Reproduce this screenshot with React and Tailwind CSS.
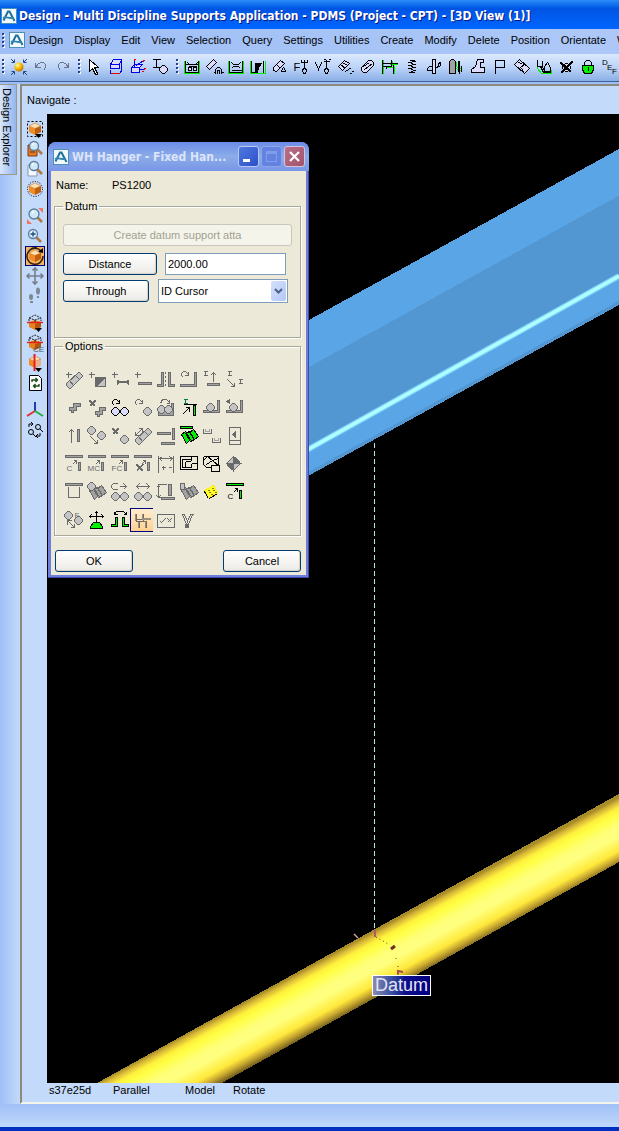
import React from "react";

const G = "#6a6a6a";
const L = "#c4c4c4";
const M = "#a2a2a2";
const K = "#000000";
const N = "#00f000";
const V = "#dcdcfa";

const plus = ["M3 0V6M0 3H6", G];
const cross = (c) => ["M1 1L7 7M2 1L7 6M1 2L6 7M7 1L1 7M6 1L1 6M7 2L2 7", c];
const diagBar = ["M1 12L13 1H14L17 4V5L5 17H4L1 14ZM4 9L8 14M10 4L14 8", G, L];
const dia = (x, y, c = G, f = L) => [`M${x - 1} ${y - 4}H${x + 1}L${x + 4} ${y - 1}V${y + 1}L${x + 1} ${y + 4}H${x - 1}L${x - 4} ${y + 1}V${y - 1}Z`, c, f];
const curve = (c) => ["M3 6L1 4V2L3 0H5L8 3M8 0V4H4", c];
const ell = ["M14 1H16V15H0V13H14Z", G, M];
const topBar = (c, f) => ["M0 0H17V2H0Z", c, f];
const post = (c, f) => ["M13 7H15V15H13Z", c, f];
const smallArrow = (c) => ["M7 9L11 5M8 5H11V8", c];
const beam = (c, f) => ["M1 7L5 4L10 12L6 16ZM5 6L9 4L14 12L10 14ZM9 5L13 2L18 9L14 12Z", c, f];

const OPTIONS = [
  { n: "Add plate", p: [diagBar, plus] },
  { n: "Add corner", p: [plus, ["M7 6H17V15H7Z", G, G], ["M16 8L10 14H16Z", L, L]] },
  { n: "Add beam", p: [plus, ["M6 8V13M17 8V13M6 9L8 10H15L17 9M6 12L8 11H15L17 12", G]] },
  { n: "Add bar", p: [plus, ["M4 11H17V13H4Z", G, M]] },
  { n: "Mirror", p: [["M4 1H6V15H0V13H4ZM11 1H13V13H17V15H11Z", G, M], ["M8 0V2M8 4V6M8 8V10M8 12V14", G]] },
  { n: "Rotate leg", p: [ell, curve(G)] },
  { n: "Raise beam", p: [["M0 0H4M0 4H4M2 0V4M10 10V1M7 4L10 1L13 4", G], ["M4 12H16V14H4Z", G, M]] },
  { n: "Move beam", p: [["M1 0H5M1 4H5M3 0V4M12 8H16M12 12H16M14 8V12M1 8L8 15M4 15H8V11", G], ["M2 0H4M2 4H4M13 8H15M13 12H15", G]] },

  { n: "Step", p: [["M4 8H8V4H15V7H11V11H8V13H6V11H4Z", G, M]] },
  { n: "Delete step", p: [cross(G), ["M7 12H11V8H17V11H14V15H11V17H9V15H7Z", G, M]] },
  { n: "Rotate pair", p: [curve(K), dia(4, 12, K, V), dia(13, 12, K, V)] },
  { n: "Rotate one", p: [curve(G), dia(13, 12)] },
  { n: "Swap pair", p: [["M1 11H14V4H16V16H1Z", G, M], dia(4, 10), dia(11, 10), ["M3 4L5 0H9L12 3M12 0V4H9", G]] },
  { n: "Align post", p: [["M3 0H7M3 4H7M5 0V4", "#007850"], ["M3 5H16M2 15L9 8M5 8H9V12", K], ["M13 6H15V16H13Z", K, N]] },
  { n: "Pipe on leg", p: [["M14 1H16V13H0V11H14Z", G, M], dia(7, 8)] },
  { n: "Pipe to leg", p: [["M14 1H16V13H0V11H14Z", G, M], dia(7, 8), ["M0 2L3 0V4Z", G, G]] },

  { n: "Lift post", p: [["M6 15V2M3 5L6 2L9 5", G], ["M12 2H14V14H12Z", G, M]] },
  { n: "Move pair", p: [dia(3, 3), dia(13, 8), ["M2 9L9 16M5 16H9V12", G]] },
  { n: "Delete item", p: [cross(G), dia(13, 12)] },
  { n: "Slide plate", p: [diagBar, ["M1 8L8 1M1 4V8H5M4 1H8V4", G]] },
  { n: "Space bars", p: [["M0 5H13V7H0ZM15 1H17V12H15ZM4 15H17V17H4Z", G, M]] },
  { n: "Deck beam", p: [beam(K, N), ["M0 -1H12V1H0Z", K, N]] },
  { n: "Channels", p: [["M0 1V6H8V1M9 10V15H17V10", G], ["M2 1V4H6V1M11 10V13H15V10", M]] },
  { n: "Sheet view", p: [["M3 0H14V17H3ZM3 13H14", G], ["M6 7L9 4V10Z", G, G]] },

  { n: "Copy support", p: [topBar(G, M), post(G, M), smallArrow(G)], t: ["C", 1, 15, G] },
  { n: "Mirror copy", p: [topBar(G, M), post(G, M), smallArrow(G)], t: ["MC", -1, 15, G] },
  { n: "Flip copy", p: [topBar(G, M), post(G, M), smallArrow(G)], t: ["FC", 0, 15, G] },
  { n: "Delete copy", p: [topBar(G, M), post(G, M), smallArrow(G), ["M2 9L9 16M3 9L9 15M2 10L8 16M9 9L2 16M8 9L2 15", G]] },
  { n: "Dimension", p: [["M1 0V17M16 0V17M2 3H15M5 1L2 3L5 6M12 1L15 3L12 6M4 12H8M6 10V14M11 12H14", G]] },
  { n: "Plan view", p: [["M0 1H17V14H0ZM2 12V4H10M2 12H11V8M11 1V5M11 8H17M5 6V12M5 6H10", K]] },
  { n: "Detail view", p: [["M0 1H15V9M0 1V9L3 12H9M0 5L4 1M3 9L9 5L15 3M4 1L15 10", K], ["M8 10H16V16H8Z", K, "#ece9d8"]] },
  { n: "Centre", p: [["M7 1L14 8L7 15L0 8Z", G, L], ["M7 1V8H14L11 4ZM7 15V8H0L3 12Z", G, G], ["M7 0V16M-1 8H15", G]] },

  { n: "Table frame", p: [topBar(G, M), ["M3 3V14H14V3", G]] },
  { n: "Beam end", p: [beam(G, M), dia(3, 3)] },
  { n: "Turn left", p: [dia(4, 13), dia(13, 13), ["M6 6H2L0 4V2L2 0H6M8 3H15M12 0L15 3L12 6", G]] },
  { n: "Spread pair", p: [dia(4, 13), dia(13, 13), ["M2 3H15M5 0L2 3L5 6M12 0L15 3L12 6", G]] },
  { n: "Height", p: [["M11 1H14V12H11ZM4 14H17V16H4Z", G, M], ["M1 2V14M0 1H9M0 14H3M-1 4L1 2L3 4M-1 12L1 14L3 12", G]] },
  { n: "Beam block", p: [beam(G, M), ["M0 0H4V6H0Z", G, L]] },
  { n: "Notes", p: [["M1 7L10 2L14 9L5 14Z", "#fff200", "#ffff30"], ["M1 8L5 15M6 15L14 10", K], ["M4 7H6M8 5H10M5 9H7M9 7H11M7 11H9M11 9H13", "#8a7c00"]] },
  { n: "Copy post", p: [topBar(K, N), post(K, N), smallArrow(K)], t: ["C", 1, 15, K] },

  { n: "Fit pair", p: [dia(3, 4), dia(13, 9), ["M2 9L9 16M2 13V9H6M5 16H9V12", G]], t: ["F", 9, 6, G] },
  { n: "Move base", p: [["M1 5H15M8 0V10M3 3L1 5L3 7M13 3L15 5L13 7M6 2L8 0L10 2", K], ["M2 17V15L5 11H11L14 15V17Z", K, N]] },
  { n: "Swing legs", p: [["M4 6H6V15H0V13H4ZM11 6H13V13H17V15H11Z", K, N], ["M3 3L5 0H12L15 3M3 0V3H6M12 3H15V0", K]] },
  { n: "Join frames", on: true, p: [["M2 2V9M9 2V9M1 8H11M1 10H11M5 10V16M12 9V16", G], ["M1 2V9M8 2V8M8 7H16M8 8H16M4 10V16M11 9V16", "#9a9082"]] },
  { n: "Check", p: [["M0 3H17V16H0ZM3 10L4 11L8 7M10 7L14 11M14 7L10 11", G]] },
  { n: "Clamp", p: [["M1 3H4M2 3L6 13M4 3L7 10L10 3M12 3L8 13M10 3H13", G], ["M5 13H8V16H5Z", G, G]] },
];

function Icon({ p, t }) {
  return (
    <svg width="18" height="18" viewBox="0 0 18 18" className="shrink-0 overflow-visible" shapeRendering="crispEdges" aria-hidden="true">
      <g transform="translate(.5 .5)">
        {p.map(([d, s, f], i) => (
          <path key={i} d={d} stroke={s} fill={f || "none"} />
        ))}
        {t && (
          <text x={t[1]} y={t[2]} fill={t[3]} fontSize={t[4] || 8} fontFamily="Liberation Sans, sans-serif">{t[0]}</text>
        )}
      </g>
    </svg>
  );
}

function Ball() {
  return (
    <svg width="18" height="18" viewBox="0 0 18 18" className="overflow-visible" aria-hidden="true">
      <defs>
        <radialGradient id="ball" cx=".35" cy=".3" r=".8">
          <stop offset="0" stopColor="#fff8c0" />
          <stop offset=".4" stopColor="#ffc800" />
          <stop offset="1" stopColor="#c06000" />
        </radialGradient>
      </defs>
      <circle cx="9" cy="9" r="4.5" fill="url(#ball)" />
      <path d="M1 1L4 4M4.500 1.500V4.500H1.500M17 1L14 4M13.500 1.500V4.500H16.500M1 17L4 14M1.500 13.500H4.500V16.500M17 17L14 14M16.500 13.500H13.500V16.500" stroke="#204880" fill="none" />
    </svg>
  );
}

const B = "#0000e8";
const R = "#e80000";
const UD = "#6b7488";
const TOOLBAR = [
  [
    { n: "Focus", ball: true },
    { n: "Undo", p: [["M3 4V9H8M3 9L6 5L9 4H11L13 6V9L11 12", UD]] },
    { n: "Redo", p: [["M14 4V9H9M14 9L11 5L8 4H6L4 6V9L6 12", UD]] },
  ],
  [
    { n: "Select", p: [["M4 1V13L7 10L10 16H12V15L9 9H13Z", K, "#fff"]] },
    { n: "Model box", p: [["M3 6L6 1H14L12 6ZM3 6H12V10H3ZM14 1V13", B, V], ["M3 11V15H12L14 12", B], ["M3 15H12", R]] },
    { n: "Axes", p: [["M2 9H10V14H2ZM2 9L5 6H13L10 9Z", B, V], ["M5 8V1M7 7L14 2M10 11H15", B], ["M4 1H6M5 0V2M13 2H15M14 1V3M14 10H16M15 9V11M12 13H14", R]] },
    { n: "Attach pipe", p: [["M1 1H9M1 9H9M5 1V9", K], dia(12, 11, K, V)] },
  ],
  [
    { n: "Frame", p: [["M1 2V15H16V2", N], ["M2 2V14M15 2V14M2 14H15M2 6H15M5 8H13M4 4L6 6M14 4L12 6", K], ["M5 9H8V12H5ZM10 9H13V12H10Z", K, V]] },
    { n: "Clamp plate", p: [["M1 8L8 1L11 4L4 11Z", K, V], ["M10 15V11L12 9H14L16 11V15M8 14H10M16 14H18M12 15V12H14V15", K]] },
    { n: "Beam frame", p: [["M1 2V15H16V2", N], ["M2 2V14M15 2V14M2 14H15M4 4L6 6H11L13 4M4 10L6 8H11L13 10M4 12H14", K]] },
    { n: "Corner frame", p: [["M1 2V15H16V2", N], ["M2 2V14M14 2V14M2 14H6", K], ["M6 14V5H12L9 9L8 14Z", K, K]] },
    { n: "Ancillary", p: [["M2 9L9 2L13 5L5 13L2 12ZM5 6L9 10", K, V], ["M9 14L12 9L15 14M10 13H14", K]] },
    { n: "Fork F", p: [["M11 1V9M8 1V4H14V1M10 10H12L13 12L12 15H10L9 12Z", K]], t: ["F", 0, 12, K, 11] },
    { n: "Fork V", p: [["M0 4L3 11L6 4M11 1V9M8 1H10M13 1H15M8 3H14M10 10H12L13 12L12 15H10L9 12Z", K]] },
    { n: "Plate move", p: [["M1 8L7 2L12 5L5 12ZM3 6L8 10M5 4L10 7", K, V], ["M8 13L14 9M14 13H16M12 15H14", K]] },
    { n: "Roll", p: [["M2 9L9 2H12L14 4V7L7 14H4L2 12ZM4 8L10 4M5 11L13 5", K, V]] },
    { n: "Join", p: [["M2 1V15M11 2V7M4 9H11M8 6H16M13 7V15", N], ["M1 1V15M1 5H10M1 8H10M10 1V8M8 5H16M12 6V15M5 8V10", K]] },
    { n: "Spring", p: [["M6 2H11L12 3L6 4L11 6L6 7L11 9L6 10L11 12L6 14H11", K]] },
    { n: "Guide", p: [["M7 1H10V15H7Z", K, V], ["M7 8H4L2 10V12H7M10 9L13 8V5L15 4V7L10 10", K]] },
    { n: "Column", p: [["M2 3L4 1H6L8 3V15H2Z", K, M], ["M9 3V8L12 10L15 9M9 10L14 13", N], ["M12 2V15M11 2V13M14 7V13", K]] },
    { n: "Base plate", p: [["M2 14V11L6 8L8 1H14V4H11V9H15V14Z", K, V]] },
    { n: "Flag", p: [["M4 15V2H13V9H4", K]] },
    { n: "Wrap", p: [["M1 6L6 1L16 10L11 15ZM4 3L9 6M7 9L12 5M11 15L8 10", K, V]] },
    { n: "Bracket", p: [["M2 8V10L6 15H16V11", N], ["M2 1V8H7V2M7 8L9 13M5 8L8 14H15V9L12 4L9 8V13H14", K]] },
    { n: "Remove", p: [dia(9, 9, K, V), ["M3 4L14 14M4 4L14 13M3 5L13 14M15 3L3 15M14 3L3 14M15 4L4 15", K]] },
    { n: "Lock", p: [["M5 7V4L7 2H10L12 4V7", K], ["M3 7H14V11L12 15H5L3 11Z", K, N], ["M8 9H9V12H8", K]] },
    { n: "Define", extra: true },
  ],
];

function Grip() {
  return (
    <svg width="3" height="19" viewBox="0 0 3 19" shapeRendering="crispEdges" className="shrink-0" aria-hidden="true">
      {[2, 6, 10, 14].map((y) => (
        <g key={y}>
          <rect x="1" y={y + 1} width="2" height="2" fill="#fff" />
          <rect x="0" y={y} width="2" height="2" fill="#27418f" />
        </g>
      ))}
    </svg>
  );
}

function Logo() {
  return (
    <svg width="16" height="16" viewBox="0 0 16 16" className="shrink-0" aria-hidden="true">
      <rect x=".5" y=".5" width="15" height="15" fill="#f2f8fb" stroke="#4a90b8" />
      <path d="M2.500 12.500L7 3.500H8.500L13.500 13" fill="none" stroke="#20709c" strokeWidth="2" />
      <path d="M2 10C5 8 8 11 13 10" fill="none" stroke="#2f86b0" strokeWidth="1.800" />
    </svg>
  );
}

const Cube = ({ x = 3, y = 3 }) => (
  <g transform={`translate(${x} ${y})`}>
    <path d="M0 3L6 0L12 3L6 5.500Z" fill="#ffe0b0" stroke="#b86a20" strokeWidth=".5" />
    <path d="M0 3L6 5.500V12L0 9Z" fill="#f08c28" />
    <path d="M12 3L6 5.500V12L12 9Z" fill="#c0600e" />
  </g>
);
const Lens = ({ x = 7, y = 6, r = 4.5 }) => (
  <g>
    <path d={`M${x + 3} ${y + 3}L${x + 8} ${y + 8}`} stroke="#b07840" strokeWidth="2.500" />
    <circle cx={x} cy={y} r={r} fill="#cfe8fa" stroke="#5c7c9c" strokeWidth="1.300" />
    <path d={`M${x - 2} ${y - 1}L${x} ${y - 3}`} stroke="#fff" strokeWidth="1.200" />
  </g>
);
const Drop = () => <path d="M9 14H16L12.500 18Z" fill="#000" />;
const Wire = () => (
  <g>
    <path d="M3 8L9 6L15 8V13L9 16L3 13Z" fill="#e8801c" />
    <path d="M9 10L15 8V13L9 16Z" fill="#b4560c" />
    <path d="M3 7V4L9 1L15 4V7M3 4L9 6L15 4M9 6V9" fill="none" stroke="#222" strokeDasharray="2 1" />
    <path d="M1 8.500H17" stroke="#e02020" strokeWidth="1.400" />
  </g>
);

const NAV = [
  [
    ["Zoom to selection", <><rect x="1.500" y="1.500" width="15" height="15" fill="none" stroke="#000" strokeDasharray="2 2" /><Cube /><Drop /></>],
    ["Zoom to element", <><path d="M2 5H11V16H2Z" fill="#e07828" stroke="#8a3c0c" /><path d="M4 12H9" stroke="#702c08" /><Lens x={8} y={6} /></>],
    ["Zoom to drawing", <><path d="M2 5H11V16H2Z" fill="#f4f8ff" stroke="#8a97ac" /><Lens x={8} y={6} /></>],
    ["Limits", <><circle cx="9" cy="9" r="7.5" fill="none" stroke="#000" strokeDasharray="1 1.500" /><Cube /></>],
  ],
  [
    ["Zoom area", <><path d="M12 1H17V6ZM1 12V17H6Z" fill="#f07860" /><Lens x={8} y={7} r={5} /></>],
    ["Zoom in", <><Lens x={7} y={7} /><path d="M4.500 7H9.500M7 4.500V9.500" stroke="#244a78" strokeWidth="1.300" /></>],
    ["Rotate", <><Cube /><path d="M15 4A8 8 0 1 0 17 9M11 1A8 8 0 0 0 5 2" fill="none" stroke="#302010" strokeWidth="1.500" /><path d="M12 5L17 1V6Z" fill="#000" /></>, true],
    ["Pan", <path d="M9 1V17M1 9H17M6.500 3.500L9 1L11.500 3.500M6.500 14.500L9 17L11.500 14.500M3.500 6.500L1 9L3.500 11.500M14.500 6.500L17 9L14.500 11.500" fill="none" stroke="#75808f" strokeWidth="1.600" />],
    ["Walk", <g fill="#7e8794"><ellipse cx="5" cy="10" rx="2" ry="3" /><rect x="4" y="14" width="3" height="2" /><ellipse cx="12" cy="4" rx="2" ry="3.500" /><rect x="11" y="9" width="2" height="2" /></g>],
  ],
  [
    ["Clip box", <><Wire /><Drop /></>],
    ["Clip current element", <><Wire /><text x="7" y="18" fontSize="8" fill="#4c5666" fontFamily="Liberation Sans, sans-serif">CE</text></>],
    ["Clip plane", <><Cube y={2} /><path d="M9 7.500L15 5V11L9 14Z" fill="#e8b08c" /><path d="M8.500 0V17" stroke="#e82020" strokeWidth="2" /><Drop /></>],
    ["Refresh", <><path d="M3.500 1.500H12.500L15.500 4.500V16.500H3.500Z" fill="#fff" stroke="#000" /><path d="M6 8V6H11M9.500 4L11.500 6L9.500 8M13 10V12H8M9.500 10L7.500 12L9.500 14" fill="none" stroke="#184c18" strokeWidth="1.400" /></>],
  ],
  [
    ["Axes", <><path d="M9 10V1" stroke="#2040b0" strokeWidth="2" /><path d="M9 10L1 15" stroke="#e03030" strokeWidth="2" /><path d="M9 10L17 15" stroke="#20b040" strokeWidth="2" /></>],
    ["Swap views", <g fill="none" stroke="#000"><circle cx="12" cy="6" r="2.500" /><path d="M14 8L17 11M3 6V3H6M5 1L7 3L5 5M14 12V15H10M12 13L10 15L12 17M7 13L10 16" /><circle cx="5" cy="11" r="2.500" /></g>],
  ],
];

const MENU = ["Design", "Display", "Edit", "View", "Selection", "Query", "Settings", "Utilities", "Create", "Modify", "Delete", "Position", "Orientate", "Window"];

function Scene() {
  return (
    <svg className="absolute inset-0 h-full w-full" aria-hidden="true">
      <defs>
        <linearGradient id="pipe" gradientUnits="userSpaceOnUse" x1="97" y1="1083" x2="126" y2="1136">
          <stop offset="0" stopColor="#a88c28" />
          <stop offset=".06" stopColor="#d8b838" />
          <stop offset=".15" stopColor="#fff03c" />
          <stop offset=".24" stopColor="#ffff44" />
          <stop offset=".42" stopColor="#ffff7c" />
          <stop offset=".56" stopColor="#ffff80" />
          <stop offset=".68" stopColor="#fff458" />
          <stop offset=".78" stopColor="#ffe83c" />
          <stop offset=".88" stopColor="#c8a830" />
          <stop offset="1" stopColor="#66541a" />
        </linearGradient>
      </defs>
      <g transform="translate(-47 -114)">
        <g shapeRendering="crispEdges">
          <path d="M299 325.500L619 149V305L299 481Z" fill="#5aa5e6" />
          <path d="M299 372.500L619 195.500V276L299 455Z" fill="#5296d2" />
          <path d="M299 477L619 301V305L299 481Z" fill="#5296d2" />
        </g>
        <path d="M299 454.500L619 276" stroke="#7cd0fa" strokeWidth="6" />
        <path d="M299 454.500L619 276" stroke="#b0ffff" strokeWidth="3.500" />
        <path d="M97 1083L619 794V862L222 1083Z" fill="url(#pipe)" shapeRendering="crispEdges" />
        <path d="M374.500 443V932" stroke="#b4e6ea" strokeDasharray="5 3" shapeRendering="crispEdges" />
        <path d="M375 930V937" stroke="#b85860" strokeWidth="2" />
        <path d="M354 934L358 938" stroke="#d8a0a0" strokeWidth="1.500" />
        <path d="M376 937L390 945M396 958V962M398 966V982" stroke="#5c4a14" strokeDasharray="1 3" />
        <path d="M391 949L395 946" stroke="#703028" strokeWidth="3" />
        <path d="M398 974V971L403 972" stroke="#a84850" strokeWidth="2" fill="none" />
      </g>
    </svg>
  );
}

const xpButton =
  "flex h-[22px] items-center justify-center rounded-[3px] border border-[#003c74] bg-linear-to-b from-white to-[#ecebe6] text-[11px] text-black shadow-[inset_-1px_-1px_1px_#d6d0c5]";
const group = "ml-[3px] mr-[5px] min-w-0 border border-[#a8a898] shadow-[1px_1px_0_#fff,inset_1px_1px_0_#fff]";

function HangerDialog() {
  return (
    <section aria-label="WH Hanger" className="absolute left-px top-7 w-[261px] overflow-hidden rounded-t-lg bg-[#6e7edc] shadow-[inset_-1px_-1px_0_#4048a8]">
      <header className="flex h-[29px] items-center bg-linear-to-b from-[#6c8ce8] via-[#8cace8] to-[#7896e6] pl-[5px] pr-1">
        <Logo />
        <h2 className="ml-[3px] flex-1 whitespace-nowrap font-['DejaVu_Sans_Condensed','DejaVu_Sans',sans-serif] text-[12px] font-bold text-[#dce4fa]">WH Hanger - Fixed Han...</h2>
        <div className="flex gap-[2px]">
          <button aria-label="Minimize" className="flex h-[21px] w-[21px] items-end rounded-[3px] border border-[#b8c8f4] bg-linear-to-br from-[#5078e0] to-[#2c50c8] pb-1 pl-1">
            <span className="h-[3px] w-[7px] bg-white" />
          </button>
          <button aria-label="Maximize" disabled className="flex h-[21px] w-[21px] items-center justify-center rounded-[3px] border border-[#8ca4ec] bg-[#6482e0]">
            <span className="h-[11px] w-[11px] border border-t-[3px] border-[#809cec]" />
          </button>
          <button aria-label="Close" className="flex h-[21px] w-[21px] items-center justify-center rounded-[3px] border border-[#d4c4e0] bg-linear-to-br from-[#b87088] to-[#a4526c]">
            <svg width="13" height="13" viewBox="0 0 13 13" aria-hidden="true"><path d="M2 2L11 11M11 2L2 11" stroke="#fff" strokeWidth="2.200" /></svg>
          </button>
        </div>
      </header>
      <div className="mx-[3px] mb-[3px] bg-[#ece9d8] pb-[3px] text-[11px] text-black">
        <dl className="flex h-7 items-center pl-[5px] pt-px">
          <dt className="w-14">Name:</dt>
          <dd>PS1200</dd>
        </dl>
        <fieldset className={`${group} h-[139px] px-2`}>
          <legend className="px-[2px] leading-[14px]">Datum</legend>
          <button disabled className="mt-[11px] flex h-[22px] w-full items-center justify-center rounded-[3px] border border-[#c9c7ba] bg-[#f5f4ea] text-[#a1a192]">Create datum support atta</button>
          <div className="mt-[7px] flex items-center gap-2">
            <button className={`${xpButton} w-[94px]`}>Distance</button>
            <input aria-label="Distance" defaultValue="2000.00" className="h-[22px] w-[121px] border border-[#7f9db9] bg-white px-[2px]" />
          </div>
          <div className="mt-1 flex items-center gap-[9px]">
            <button className={`${xpButton} w-[86px]`}>Through</button>
            <div className="relative">
              <select aria-label="Through" className="h-6 w-[130px] appearance-none border border-[#7f9db9] bg-white px-[2px]">
                <option>ID Cursor</option>
              </select>
              <span className="pointer-events-none absolute right-[2px] top-[2px] flex h-5 w-[15px] items-center justify-center rounded-[2px] bg-linear-to-br from-[#d4e0fc] to-[#b4c8f6]">
                <svg width="9" height="6" viewBox="0 0 9 6" aria-hidden="true"><path d="M1 1L4.500 4.500L8 1" fill="none" stroke="#4d6185" strokeWidth="2" /></svg>
              </span>
            </div>
          </div>
        </fieldset>
        <fieldset className={`${group} mt-px h-[197px] px-[6px]`}>
          <legend className="ml-[2px] px-[2px] leading-[14px]">Options</legend>
          <div className="mt-[15px] grid grid-cols-[repeat(8,23px)] gap-y-1">
            {OPTIONS.map((o) => (
              <button
                key={o.n}
                aria-label={o.n}
                aria-pressed={!!o.on}
                className={o.on ? "flex h-6 items-center border border-r-0 border-[#000080] bg-linear-to-b from-[#ffeccc] to-[#ffd08c] pl-[3px]" : "flex h-6 items-center pl-1"}
              >
                <Icon p={o.p} t={o.t} />
              </button>
            ))}
          </div>
        </fieldset>
        <div className="ml-1 mr-[5px] mt-[14px] flex justify-between">
          <button className={`${xpButton} w-[78px]`}>OK</button>
          <button className={`${xpButton} w-[78px]`}>Cancel</button>
        </div>
      </div>
    </section>
  );
}

export default function App() {
  return (
    <div className="flex min-h-screen flex-col overflow-hidden bg-[#9ebef5] font-['Liberation_Sans',Arial,sans-serif] text-[11px] text-black">
      <header className="flex h-[29px] shrink-0 items-center gap-[2px] bg-linear-to-b from-[#2a8cf8] via-[#0054e3] via-30% to-[#0066ff] pl-px pt-[2px]">
        <Logo />
        <h1 className="whitespace-nowrap font-['DejaVu_Sans_Condensed','DejaVu_Sans',sans-serif] text-[12px] font-bold text-white [text-shadow:1px_1px_0_#0a1883]">
          Design - Multi Discipline Supports Application - PDMS (Project - CPT) - [3D View (1)]
        </h1>
      </header>
      <nav aria-label="Menu" className="flex h-[25px] shrink-0 items-center overflow-hidden bg-linear-to-r from-[#9ebef5] to-[#adc8f8] pb-[3px] pl-[2px]">
        <Grip />
        <span className="ml-1"><Logo /></span>
        <ul className="ml-1 flex gap-[11px] whitespace-nowrap">
          {MENU.map((m) => (
            <li key={m}><button>{m}</button></li>
          ))}
        </ul>
      </nav>
      <div role="toolbar" aria-label="Tools" className="flex h-7 shrink-0 overflow-hidden border-b border-[#3b619c] bg-linear-to-b from-[#dce9fd] via-[#bcd3f8] to-[#8aafe6]">
        {TOOLBAR.map((section, i) => (
          <div key={i} className={i === 0 ? "flex shrink-0 items-center pb-[2px] pl-[2px]" : "flex shrink-0 items-center pb-[2px] pl-[3px]"}>
            <Grip />
            <div className={i === 0 ? "ml-[3px] flex pr-px" : "ml-[2px] flex pr-[2px]"}>
              {section.map((b) => (
                <button key={b.n} aria-label={b.n} className="flex w-[22px] items-center justify-center">
                  {b.ball ? (
                    <Ball />
                  ) : b.extra ? (
                    <svg width="18" height="18" viewBox="0 0 18 18" className="overflow-visible" fontSize="8" fontFamily="Liberation Sans, sans-serif" aria-hidden="true">
                      <text x="1" y="7">D</text><text x="6" y="12">E</text><text x="11" y="16">F</text>
                    </svg>
                  ) : (
                    <Icon p={b.p} t={b.t} />
                  )}
                </button>
              ))}
            </div>
          </div>
        ))}
      </div>
      <div className="flex flex-1 pt-[2px]">
        <aside className="w-5 shrink-0 bg-linear-to-r from-[#9ebef5] to-[#c4dafa]">
          <button className="flex h-[91px] w-[17px] items-center justify-center whitespace-nowrap border border-l-0 border-[#9c9a8c] bg-linear-to-r from-[#d8e6fc] to-[#94b6ea] pb-[5px] pr-[3px] text-[11px] [writing-mode:vertical-rl]">Design Explorer</button>
        </aside>
        <main className="flex min-w-0 flex-1 flex-col border-b-2 border-l-2 border-t-2 border-b-[#f4f4ee] border-l-[#8c8a7c] border-t-[#8c8a7c] bg-[#c4dafa]">
          <div className="flex h-7 items-center pl-[5px] pt-px">Navigate :</div>
          <div className="flex flex-1">
            <div role="toolbar" aria-label="View tools" className="flex w-[25px] shrink-0 flex-col items-center gap-[7px] pt-[5px]">
              {NAV.map((g, i) => (
                <div key={i} className="flex flex-col">
                  {g.map(([n, art, on]) => (
                    <button key={n} aria-label={n} className={on ? "flex h-5 w-5 items-center justify-center border border-[#000080] bg-[#f8b45c]" : "flex h-5 w-5 items-center justify-center"}>
                      <svg width="18" height="18" viewBox="0 0 18 18" className="shrink-0 overflow-visible" aria-hidden="true">{art}</svg>
                    </button>
                  ))}
                </div>
              ))}
            </div>
            <div className="relative min-h-[600px] min-w-0 flex-1 overflow-hidden bg-black">
              <Scene />
              <HangerDialog />
              <span className="absolute left-[325px] top-[861px] border border-white bg-linear-to-r from-[#8c8cb4] via-[#10108c] via-55% to-[#000080] px-[2px] text-[18px] leading-[19px] text-[#e4e4f0]">Datum</span>
            </div>
          </div>
          <div className="flex h-[19px] items-center pb-1 pl-[27px]">
            <span className="w-16">s37e25d</span>
            <span className="w-[72px]">Parallel</span>
            <span className="w-12">Model</span>
            <span>Rotate</span>
          </div>
        </main>
      </div>
      <footer className="h-[27px] shrink-0 border-b-4 border-[#0030c0] bg-linear-to-b from-[#a0c0f6] to-[#c0d8fa]" />
    </div>
  );
}
